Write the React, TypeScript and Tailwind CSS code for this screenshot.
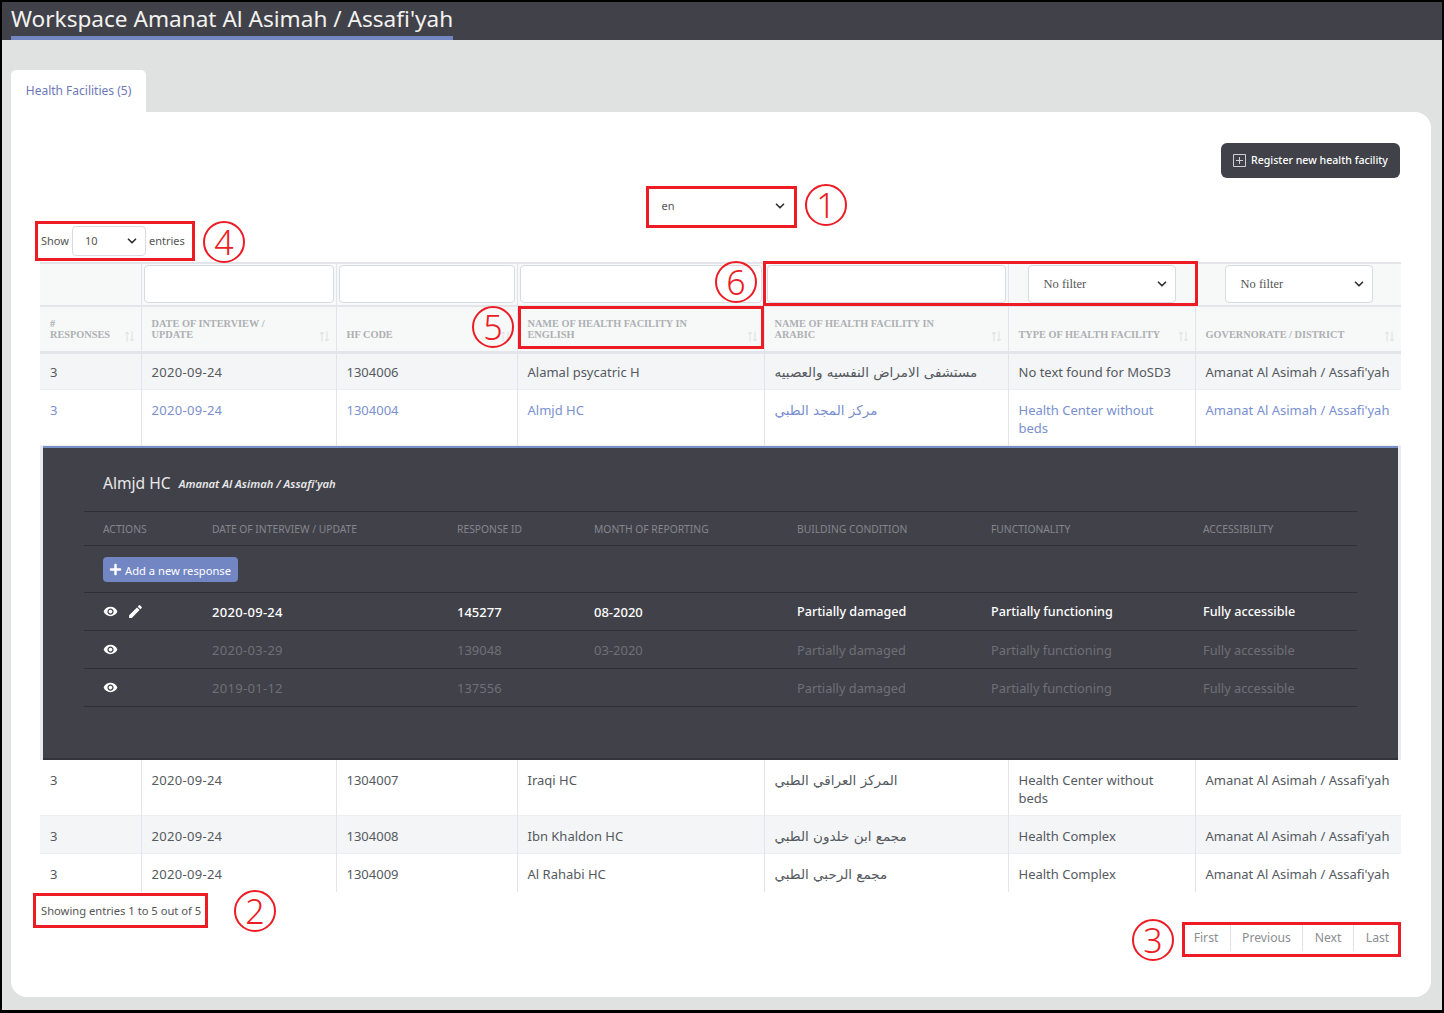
import React from 'react';
import { ChevronDown } from 'lucide-react';
import { FaPlus } from 'react-icons/fa';
import { MdEdit, MdRemoveRedEye } from 'react-icons/md';

const sans = { fontFamily: '"Noto Sans", "Open Sans", sans-serif' };

type Row = { n: string; date: string; code: string; en: string; ar: string; type: string; gov: string };

const rows: Row[] = [
  { n: '3', date: '2020-09-24', code: '1304006', en: 'Alamal psycatric H', ar: 'مستشفى الامراض النفسيه والعصبيه', type: 'No text found for MoSD3', gov: "Amanat Al Asimah / Assafi'yah" },
  { n: '3', date: '2020-09-24', code: '1304004', en: 'Almjd HC', ar: 'مركز المجد الطبي', type: 'Health Center without beds', gov: "Amanat Al Asimah / Assafi'yah" },
  { n: '3', date: '2020-09-24', code: '1304007', en: 'Iraqi HC', ar: 'المركز العراقي الطبي', type: 'Health Center without beds', gov: "Amanat Al Asimah / Assafi'yah" },
  { n: '3', date: '2020-09-24', code: '1304008', en: 'Ibn Khaldon HC', ar: 'مجمع ابن خلدون الطبي', type: 'Health Complex', gov: "Amanat Al Asimah / Assafi'yah" },
  { n: '3', date: '2020-09-24', code: '1304009', en: 'Al Rahabi HC', ar: 'مجمع الرحبي الطبي', type: 'Health Complex', gov: "Amanat Al Asimah / Assafi'yah" },
];

const responses = [
  { date: '2020-09-24', id: '145277', month: '08-2020', edit: true },
  { date: '2020-03-29', id: '139048', month: '03-2020', edit: false },
  { date: '2019-01-12', id: '137556', month: '', edit: false },
];

function Circled({ n, className }: { n: string; className: string }) {
  return (
    <div className={`absolute flex h-[42px] w-[42px] items-center justify-center rounded-full border-2 border-[#ed1c24] text-[34px] leading-none font-light text-[#ed1c24] ${className}`} style={sans}>
      {n}
    </div>
  );
}

function RedBox({ className }: { className: string }) {
  return <div className={`pointer-events-none absolute border-[3px] border-[#ed1c24] ${className}`} />;
}

function FakeSelect({ label, className, serif }: { label: string; className: string; serif?: boolean }) {
  return (
    <div className={`flex items-center justify-between rounded-[4px] border border-[#d8dbe2] bg-white text-[#555] ${className}`}>
      <span className={serif ? 'font-["Liberation_Serif",serif] text-[12.5px]' : 'text-[11px]'}>{label}</span>
      <ChevronDown size={14} strokeWidth={3} className="text-[#333]" />
    </div>
  );
}

function SortArrows() {
  return (
    <svg width="11" height="11" viewBox="0 0 11 11" fill="none" stroke="#dcdee0" strokeWidth="1" className="absolute right-[6px] bottom-[9px]">
      <path d="M3 10.5V1M1 3l2-2 2 2M8 .5V10M6 8l2 2 2-2" />
    </svg>
  );
}

function SortHead({ children }: { children: React.ReactNode }) {
  return (
    <th className="relative border-r border-[#e1e4ea] pr-5 pb-[10px] pl-[10px] align-bottom text-left font-['Liberation_Serif',serif] text-[10.3px] leading-[11.5px] font-bold text-[#adb0b3] last:border-r-0">
      {children}
      <SortArrows />
    </th>
  );
}

function DataRow({ r, striped, active, h, pt }: { r: Row; striped?: boolean; active?: boolean; h: string; pt: string }) {
  const tone = active ? 'text-[#7a90d0]' : 'text-[#555a60]';
  const cell = `border-r border-[#e1e4ea] px-[10px] ${pt} align-top text-[13px] leading-[18px] last:border-r-0`;
  return (
    <tr className={`${h} border-b border-[#eceef1] last:border-b-0 ${striped ? 'bg-[#f4f5f7]' : 'bg-white'} ${tone}`}>
      <td className={cell}>{r.n}</td>
      <td className={`${cell} tracking-[0.3px]`}>{r.date}</td>
      <td className={cell}>{r.code}</td>
      <td className={cell}>{r.en}</td>
      <td className={cell}><span dir="rtl" className="font-['DejaVu_Sans',sans-serif] text-[13.5px]">{r.ar}</span></td>
      <td className={cell}>{r.type}</td>
      <td className={`${cell} whitespace-nowrap`}>{r.gov}</td>
    </tr>
  );
}

const detailCols = 'grid grid-cols-[109px_245px_137px_203px_194px_212px_1fr] items-center px-[19px]';

function DetailPanel() {
  return (
    <div className="h-[314px] border-x-[3px] border-x-[#e8eaf0] bg-white">
      <div className="h-full border-t-2 border-b-2 border-t-[#7a90c8] border-b-[#33333a] bg-[#414149] px-[41px]">
        <div className="flex h-[63px] items-center gap-2 px-[19px] pt-[10px] text-[#e9e9ea]">
          <span className="text-[15.6px]">Almjd HC</span>
          <span className="pt-[1px] text-[11.2px] font-semibold italic">Amanat Al Asimah / Assafi'yah</span>
        </div>
        <div className={`${detailCols} h-[35px] border-y border-[#2f2f35] pt-[4px] text-[10.3px] text-[#85868c]`}>
          <span>ACTIONS</span>
          <span>DATE OF INTERVIEW / UPDATE</span>
          <span>RESPONSE ID</span>
          <span>MONTH OF REPORTING</span>
          <span>BUILDING CONDITION</span>
          <span>FUNCTIONALITY</span>
          <span>ACCESSIBILITY</span>
        </div>
        <div className="flex h-[47px] items-center border-b border-[#2f2f35] px-[19px] pt-[2px]">
          <div className="flex h-[25px] w-[135px] items-center gap-[3px] rounded-[4px] bg-[#7286c4] pt-[4px] pl-[6px] text-[11.2px] text-white">
            <FaPlus size={13} className="-mt-[5px]" />
            <span>Add a new response</span>
          </div>
        </div>
        {responses.map((r, i) => {
          const tone = i === 0 ? 'text-white font-medium' : 'text-[#6f7076]';
          const condition = i === 0 ? 'text-[12.6px]' : 'text-[12.8px]';
          return (
            <div key={r.date} className={`${detailCols} h-[38px] border-b border-[#2f2f35] pt-[3px] text-[13px] ${tone}`}>
              <span className="-mt-[3px] flex items-center gap-[9px] text-white">
                <MdRemoveRedEye size={15} />
                {r.edit && <MdEdit size={17} />}
              </span>
              <span className="tracking-[0.3px]">{r.date}</span>
              <span>{r.id}</span>
              <span>{r.month}</span>
              <span className={condition}>Partially damaged</span>
              <span className={condition}>Partially functioning</span>
              <span className={condition}>Fully accessible</span>
            </div>
          );
        })}
      </div>
    </div>
  );
}

export default function App() {
  return (
    <div className="relative h-[1013px] w-[1444px] overflow-hidden border-2 border-b-[3px] border-black bg-[#e0e2e1]" style={sans}>
      <header className="flex h-[38px] bg-[#414149] pl-[9px]">
        <h1 className="h-full border-b-[4px] border-[#7186c2] text-[22.6px] leading-[34px] text-[#f2f2f0]">Workspace Amanat Al Asimah / Assafi'yah</h1>
      </header>

      <div className="pt-[30px] pr-[11px] pl-[9px]">
        <div className="flex h-[42px] w-[135px] items-center justify-center rounded-t-[5px] bg-white text-[12px] text-[#6d78b8]">Health Facilities (5)</div>
        <main className="h-[885px] rounded-tr-[16px] rounded-b-[16px] bg-white pt-[31px] pr-[30px] pl-[29px]">
          <div className="flex justify-end pr-[1px]">
            <div className="flex h-[35px] w-[179px] items-center gap-[5px] rounded-[6px] bg-[#414149] pl-[12px] text-[10.6px] font-medium text-white">
              <svg width="13" height="13" viewBox="0 0 13 13" fill="none" stroke="#d0d0d4" strokeWidth="1">
                <path d="M.5.5h12v12H.5zM6.5 3v7M3 6.5h7" />
              </svg>
              <span>Register new health facility</span>
            </div>
          </div>

          <div className="flex justify-center pt-[10px] pr-[4px]">
            <div className="flex h-[38px] w-[148px] items-center justify-between pr-[6px] pb-[2px] pl-[17px] text-[11px] text-[#555]">
              <span>en</span>
              <ChevronDown size={14} strokeWidth={3} className="text-[#333]" />
            </div>
          </div>

          <div className="flex h-[36px] items-center gap-[3px] pb-[6px] pl-[1px] text-[11px] text-[#555]">
            <span>Show</span>
            <FakeSelect label="10" className="h-[30px] w-[74px] pr-[6px] pl-[12px]" />
            <span>entries</span>
          </div>

          <table className="w-[1361px] table-fixed border-collapse">
            <colgroup>
              <col className="w-[101px]" />
              <col className="w-[195px]" />
              <col className="w-[181px]" />
              <col className="w-[247px]" />
              <col className="w-[244px]" />
              <col className="w-[187px]" />
              <col className="w-[206px]" />
            </colgroup>
            <thead>
              <tr className="h-[43px] border-y-2 border-[#e3e5ea] bg-[#f7f8f8]">
                <td className="border-r border-[#e1e4ea]" />
                {[0, 1, 2, 3].map(i => (
                  <td key={i} className="border-r border-[#e1e4ea] px-[2px] pt-[1px] align-top">
                    <div className="h-[38px] rounded-[4px] border border-[#d8dbe2] bg-white" />
                  </td>
                ))}
                <td className="border-r border-[#e1e4ea] pt-[1px] pl-[19px] align-top">
                  <FakeSelect serif label="No filter" className="h-[38px] w-[148px] pr-[6px] pl-[15px]" />
                </td>
                <td className="pt-[1px] pl-[29px] align-top">
                  <FakeSelect serif label="No filter" className="h-[38px] w-[148px] pr-[6px] pl-[15px]" />
                </td>
              </tr>
              <tr className="h-[46px] border-b-[3px] border-[#e3e5ea] bg-[#f7f8f8]">
                <SortHead><span className="block">#</span>RESPONSES</SortHead>
                <SortHead><span className="block">DATE OF INTERVIEW /</span>UPDATE</SortHead>
                <SortHead>HF CODE</SortHead>
                <SortHead><span className="block">NAME OF HEALTH FACILITY IN</span>ENGLISH</SortHead>
                <SortHead><span className="block">NAME OF HEALTH FACILITY IN</span>ARABIC</SortHead>
                <SortHead>TYPE OF HEALTH FACILITY</SortHead>
                <SortHead>GOVERNORATE / DISTRICT</SortHead>
              </tr>
            </thead>
            <tbody>
              <DataRow r={rows[0]} striped h="h-[37px]" pt="pt-[9px]" />
              <DataRow r={rows[1]} active h="h-[56px]" pt="pt-[11px]" />
              <tr><td colSpan={7} className="p-0"><DetailPanel /></td></tr>
              <DataRow r={rows[2]} h="h-[56px]" pt="pt-[11px]" />
              <DataRow r={rows[3]} striped h="h-[38px]" pt="pt-[11px]" />
              <DataRow r={rows[4]} h="h-[38px]" pt="pt-[11px]" />
            </tbody>
          </table>

          <div className="flex items-start justify-between">
            <div className="pt-[11px] pl-[1px] text-[11.2px] text-[#555]">Showing entries 1 to 5 out of 5</div>
            <div className="mt-[32px] flex h-[27px] items-center text-center text-[12.2px] text-[#8a8d91]">
              <span className="w-[48px] leading-[27px]">First</span>
              <span className="w-[72px] border-l border-[#dfe2e8] leading-[27px]">Previous</span>
              <span className="w-[51px] border-l border-[#dfe2e8] leading-[27px]">Next</span>
              <span className="w-[48px] border-l border-[#dfe2e8] leading-[27px]">Last</span>
            </div>
          </div>
        </main>
      </div>

      {/* annotations drawn on top of the page */}
      <RedBox className="top-[184px] left-[644px] h-[42px] w-[151px]" />
      <RedBox className="top-[891px] left-[31px] h-[35px] w-[175px]" />
      <RedBox className="top-[920px] left-[1180px] h-[35px] w-[219px]" />
      <RedBox className="top-[219px] left-[33px] h-[40px] w-[160px]" />
      <RedBox className="top-[304px] left-[516px] h-[43px] w-[246px]" />
      <RedBox className="top-[259px] left-[761px] h-[45px] w-[435px]" />
      <Circled n="1" className="top-[182px] left-[803px]" />
      <Circled n="2" className="top-[888px] left-[232px]" />
      <Circled n="3" className="top-[917px] left-[1130px]" />
      <Circled n="4" className="top-[219px] left-[201px]" />
      <Circled n="5" className="top-[304px] left-[470px]" />
      <Circled n="6" className="top-[259px] left-[713px]" />
    </div>
  );
}
